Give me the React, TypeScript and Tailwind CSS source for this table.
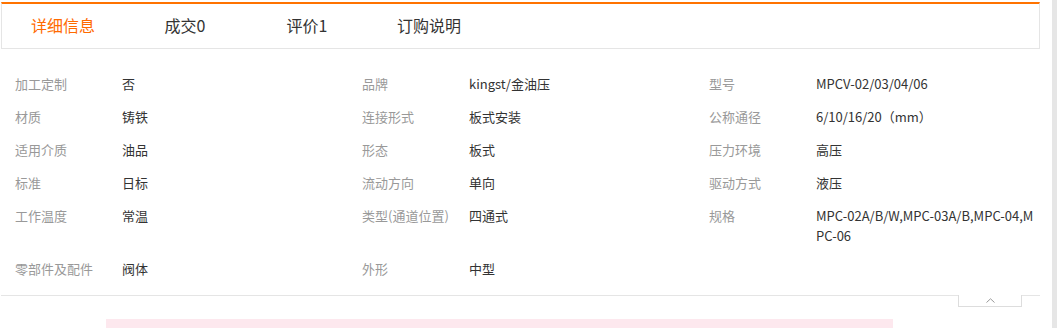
import React from "react";

interface Attr {
  label: string;
  value: string;
}

const tabs = ["详细信息", "成交0", "评价1", "订购说明"];

// attributes laid out row by row, three per row
const attrs: Attr[] = [
  { label: "加工定制", value: "否" },
  { label: "品牌", value: "kingst/金油压" },
  { label: "型号", value: "MPCV-02/03/04/06" },
  { label: "材质", value: "铸铁" },
  { label: "连接形式", value: "板式安装" },
  { label: "公称通径", value: "6/10/16/20（mm）" },
  { label: "适用介质", value: "油品" },
  { label: "形态", value: "板式" },
  { label: "压力环境", value: "高压" },
  { label: "标准", value: "日标" },
  { label: "流动方向", value: "单向" },
  { label: "驱动方式", value: "液压" },
  { label: "工作温度", value: "常温" },
  { label: "类型(通道位置)", value: "四通式" },
  { label: "规格", value: "MPC-02A/B/W,MPC-03A/B,MPC-04,MPC-06" },
  { label: "零部件及配件", value: "阀体" },
  { label: "外形", value: "中型" },
];

const font = { fontFamily: '"Noto Sans CJK SC", "Noto Sans", sans-serif' };

const App: React.FC = () => {
  return (
    <div className="w-[1057px] h-[328px] flex overflow-hidden bg-white" style={font}>
      <div className="w-[1052px] flex flex-col">
        {/* Tab bar */}
        <div className="mt-[2px] ml-px w-[1039px] h-[49px] border-t-2 border-[#ff7300] border-x border-b border-x-[#e5e5e5] border-b-[#e5e5e5] flex items-center">
          {tabs.map((t, i) => (
            <div
              key={t}
              className={`w-[122px] text-center text-[16px] leading-5 -mt-[2px] ${i === 0 ? "text-[#ff6a00]" : "text-[#333]"}`}>
              {t}
            </div>
          ))}
        </div>

        {/* Attribute list */}
        <div className="mt-[18px] ml-[15px] w-[1025px] grid grid-cols-[347px_347px_331px]">
          {attrs.map((a) => (
            <div key={a.label} className="flex pt-[7px] pb-[6px] text-[13px] leading-5">
              <div className="w-[107px] shrink-0 text-[#999]">{a.label}</div>
              <div className="w-[222px] text-[#333] break-all">{a.value}</div>
            </div>
          ))}
        </div>

        {/* Collapse bar */}
        <div className="mt-[10px] ml-px w-[1039px] flex items-start">
          <div className="w-[957px] border-t border-[#e5e5e5]" />
          <div className="w-[64px] h-[12px] border-x border-b border-[#dddddd] flex items-center justify-center">
            <svg width="9" height="5" viewBox="0 0 9 5" fill="none">
              <path d="M0.5 4.5L4.5 0.8L8.5 4.5" stroke="#999" strokeWidth="1" />
            </svg>
          </div>
          <div className="flex-1 border-t border-[#e5e5e5]" />
        </div>

        <div className="mt-[12px] ml-[106px] w-[787px] h-[10px] bg-[#fde8ee]" />
      </div>
      <div className="w-[5px] bg-[#e6e6e6]" />
    </div>
  );
};

export default App;
